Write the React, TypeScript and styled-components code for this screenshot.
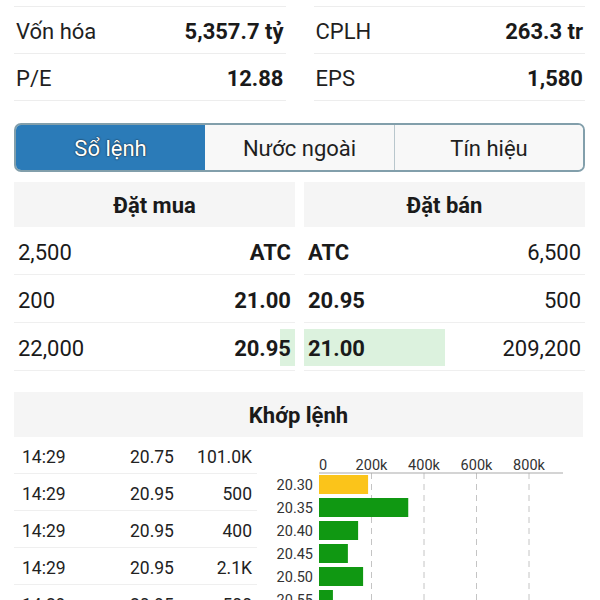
import React from "react";
import styled, { createGlobalStyle } from "styled-components";

const Global = createGlobalStyle`
  html, body { margin: 0; padding: 0; background: #ffffff; }
  body { font-family: Roboto, "Noto Sans", "Liberation Sans", sans-serif; color: #1c1c1c; }
`;

const Page = styled.div`
  padding: 6px 15px 0 14px;
  width: 600px;
  box-sizing: border-box;
  height: 600px;
  overflow: hidden;
`;

const StatsGrid = styled.div`
  display: grid;
  grid-template-columns: 1fr 1fr;
  column-gap: 28px;
`;

const StatColumn = styled.div`
  border-top: 1px solid #ededed;
`;

const StatRow = styled.div`
  display: flex;
  justify-content: space-between;
  align-items: center;
  height: 46px;
  box-sizing: border-box;
  padding: 3px 2px 0 2px;
  border-bottom: 1px solid #ededed;
  font-size: 22px;
  height: 47px;
`;

const StatLabel = styled.span`
  color: #1f1f1f;
`;

const StatValue = styled.span`
  font-weight: 700;
  color: #1a1a1a;
`;

const Tabs = styled.div`
  margin-top: 22px;
  display: grid;
  grid-template-columns: 1fr 1fr 1fr;
  height: 49px;
  border: 2px solid #829fab;
  border-radius: 7px;
  overflow: hidden;
  box-sizing: border-box;
  background: #f8f8f8;
`;

const Tab = styled.div<{ $active?: boolean; $divider?: boolean }>`
  display: flex;
  align-items: center;
  justify-content: center;
  padding-top: 2px;
  font-size: 22px;
  background: ${(p) => (p.$active ? "#2b7bb8" : "#f8f8f8")};
  color: ${(p) => (p.$active ? "#ffffff" : "#1f1f1f")};
  text-shadow: ${(p) => (p.$active ? "0 0 2px #1b2a36, 0 0 1px #1b2a36" : "none")};
  border-left: ${(p) => (p.$divider ? "1px solid #b9c7cd" : "none")};
`;

const Book = styled.div`
  margin-top: 10px;
  display: grid;
  grid-template-columns: 1fr 1fr;
  column-gap: 9px;
`;

const SectionHeader = styled.div`
  height: 45px;
  background: #f5f5f5;
  display: flex;
  align-items: center;
  justify-content: center;
  padding-top: 2px;
  box-sizing: border-box;
  font-size: 22px;
  font-weight: 700;
  color: #1a1a1a;
`;

const BookRow = styled.div`
  position: relative;
  display: flex;
  justify-content: space-between;
  align-items: center;
  height: 48px;
  box-sizing: border-box;
  border-bottom: 1px solid #efefef;
  font-size: 22px;
  padding: 3px 4px 0 4px;
`;

const Highlight = styled.div<{ $side: "buy" | "sell" }>`
  position: absolute;
  top: 6px;
  bottom: 4px;
  ${(p) => (p.$side === "buy" ? "right: 0;" : "left: 0;")}
  background: #dcf2de;
  z-index: 0;
`;

const Cell = styled.span<{ $bold?: boolean }>`
  position: relative;
  z-index: 1;
  font-weight: ${(p) => (p.$bold ? 700 : 400)};
  color: #1a1a1a;
`;

const MatchHeader = styled(SectionHeader)`
  margin-top: 21px;
  margin-right: 2px;
`;

const MatchBody = styled.div`
  display: grid;
  grid-template-columns: 243px 1fr;
  column-gap: 5px;
`;

const TradeList = styled.div``;

const TradeRow = styled.div`
  display: grid;
  grid-template-columns: 108px 50px 1fr;
  align-items: center;
  height: 37px;
  box-sizing: border-box;
  border-bottom: 1px solid #efefef;
  font-size: 17.5px;
  padding: 3px 5px 0 8px;
  color: #222;
`;

const VolCell = styled.span`
  text-align: right;
`;

const ChartBox = styled.div`
  height: 163px;
`;

const buy = [
  { qty: "2,500", price: "ATC", bar: 0 },
  { qty: "200", price: "21.00", bar: 0 },
  { qty: "22,000", price: "20.95", bar: 15 },
];
const sell = [
  { price: "ATC", qty: "6,500", bar: 0 },
  { price: "20.95", qty: "500", bar: 0 },
  { price: "21.00", qty: "209,200", bar: 141 },
];

const trades = [
  ["14:29", "20.75", "101.0K"],
  ["14:29", "20.95", "500"],
  ["14:29", "20.95", "400"],
  ["14:29", "20.95", "2.1K"],
  ["14:29", "20.95", "500"],
];

const bars = [
  { p: "20.30", v: 187000, c: "#fbc41a" },
  { p: "20.35", v: 340000, c: "#109812" },
  { p: "20.40", v: 149000, c: "#109812" },
  { p: "20.45", v: 110000, c: "#109812" },
  { p: "20.50", v: 168000, c: "#109812" },
  { p: "20.55", v: 53000, c: "#109812" },
];

function VolumeChart() {
  const x0 = 57;
  const k = 52.5 / 200000;
  const ticks = [0, 200000, 400000, 600000, 800000];
  return (
    <svg width="323" height="163" viewBox="0 0 323 163">
      {ticks.slice(1).map((t) => (
        <line
          key={"g" + t}
          x1={x0 + t * k}
          x2={x0 + t * k}
          y1={36}
          y2={163}
          stroke="#c4c4c4"
          strokeWidth="1"
          strokeDasharray="6 5"
        />
      ))}
      <line x1={x0} x2={301} y1={36} y2={36} stroke="#a9a9a9" strokeWidth="1" />
      {ticks.map((t) => (
        <text
          key={"t" + t}
          x={x0 + t * k}
          y={33}
          fontSize="14.5"
          fill="#333"
          textAnchor={t === 0 ? "start" : "middle"}
          fontFamily="Roboto, sans-serif"
        >
          {t === 0 ? "0" : `${t / 1000}k`}
        </text>
      ))}
      {bars.map((b, i) => {
        const y = 38 + i * 23;
        return (
          <g key={b.p}>
            <rect x={x0} y={y} width={b.v * k} height={19} fill={b.c} />
            <text
              x={51}
              y={y + 15}
              fontSize="14.5"
              fill="#333"
              textAnchor="end"
              fontFamily="Roboto, sans-serif"
            >
              {b.p}
            </text>
          </g>
        );
      })}
    </svg>
  );
}

export default function App() {
  return (
    <>
      <Global />
      <Page>
        <StatsGrid>
          <StatColumn>
            <StatRow>
              <StatLabel>Vốn hóa</StatLabel>
              <StatValue>5,357.7 tỷ</StatValue>
            </StatRow>
            <StatRow>
              <StatLabel>P/E</StatLabel>
              <StatValue>12.88</StatValue>
            </StatRow>
          </StatColumn>
          <StatColumn>
            <StatRow>
              <StatLabel>CPLH</StatLabel>
              <StatValue>263.3 tr</StatValue>
            </StatRow>
            <StatRow>
              <StatLabel>EPS</StatLabel>
              <StatValue>1,580</StatValue>
            </StatRow>
          </StatColumn>
        </StatsGrid>

        <Tabs>
          <Tab $active>Sổ lệnh</Tab>
          <Tab>Nước ngoài</Tab>
          <Tab $divider>Tín hiệu</Tab>
        </Tabs>

        <Book>
          <div>
            <SectionHeader>Đặt mua</SectionHeader>
            {buy.map((r, i) => (
              <BookRow key={i}>
                {r.bar > 0 && <Highlight $side="buy" style={{ width: r.bar }} />}
                <Cell>{r.qty}</Cell>
                <Cell $bold>{r.price}</Cell>
              </BookRow>
            ))}
          </div>
          <div>
            <SectionHeader>Đặt bán</SectionHeader>
            {sell.map((r, i) => (
              <BookRow key={i}>
                {r.bar > 0 && <Highlight $side="sell" style={{ width: r.bar }} />}
                <Cell $bold>{r.price}</Cell>
                <Cell>{r.qty}</Cell>
              </BookRow>
            ))}
          </div>
        </Book>

        <MatchHeader>Khớp lệnh</MatchHeader>
        <MatchBody>
          <TradeList>
            {trades.map((t, i) => (
              <TradeRow key={i}>
                <span>{t[0]}</span>
                <span>{t[1]}</span>
                <VolCell>{t[2]}</VolCell>
              </TradeRow>
            ))}
          </TradeList>
          <ChartBox>
            <VolumeChart />
          </ChartBox>
        </MatchBody>
      </Page>
    </>
  );
}
